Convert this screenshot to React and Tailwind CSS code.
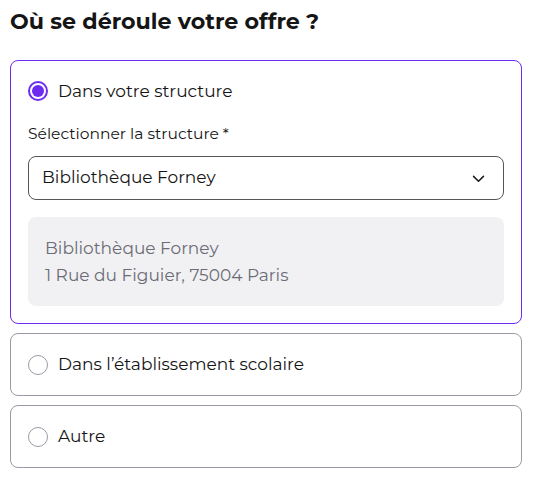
import React, { useState } from 'react';

const Radio = ({ checked }) => (
  <span
    className={`flex h-5 w-5 shrink-0 items-center justify-center rounded-full ${
      checked ? 'border-2 border-[#6b2bf0]' : 'border-[1.5px] border-[#9a9aa6]'
    }`}
  >
    {checked && <span className="h-3 w-3 rounded-full bg-[#6b2bf0]" />}
  </span>
);

export default function App() {
  const [choice, setChoice] = useState('structure');

  return (
    <div className="bg-white text-[#151515] font-['Montserrat','DejaVu_Sans',sans-serif]">
      <div className="w-[512px] ml-[10px] pt-[8px]">
        <h1 className="text-[22.2px] font-bold leading-[28px]">Où se déroule votre offre ?</h1>

        <div className="mt-[24px] flex flex-col gap-[9px]">
          <div className="rounded-lg border border-[#6b2bf0] px-[17px] pt-[18px] pb-[17px]">
            <button className="flex items-center gap-[10px] text-[17px] leading-[24px]" onClick={() => setChoice('structure')}>
              <Radio checked={choice === 'structure'} />
              <span>Dans votre structure</span>
            </button>

            <p className="mt-[21px] text-[15.5px] leading-[20px]">Sélectionner la structure *</p>

            <div className="mt-[12px] flex h-[44px] items-center justify-between rounded-lg border border-[#555] pl-[13px] pr-[16px] text-[17px]">
              <span>Bibliothèque Forney</span>
              <svg width="17" height="17" viewBox="0 0 24 24" fill="none" stroke="#151515" strokeWidth="2" strokeLinecap="round" strokeLinejoin="round">
                <path d="M5 9l7 7 7-7" />
              </svg>
            </div>

            <div className="mt-[17px] rounded-lg bg-[#f1f1f4] px-[17px] pt-[18px] pb-[17px] text-[17px] leading-[27px] text-[#6c6c74]">
              <p>Bibliothèque Forney</p>
              <p>1 Rue du Figuier, 75004 Paris</p>
            </div>
          </div>

          <button
            className="flex h-[63px] items-center gap-[10px] rounded-lg border border-[#9a9aa6] px-[17px] text-left text-[17px]"
            onClick={() => setChoice('school')}
          >
            <Radio checked={choice === 'school'} />
            <span>Dans l’établissement scolaire</span>
          </button>

          <button
            className="flex h-[63px] items-center gap-[10px] rounded-lg border border-[#9a9aa6] px-[17px] text-left text-[17px]"
            onClick={() => setChoice('other')}
          >
            <Radio checked={choice === 'other'} />
            <span>Autre</span>
          </button>
        </div>
      </div>
    </div>
  );
}
